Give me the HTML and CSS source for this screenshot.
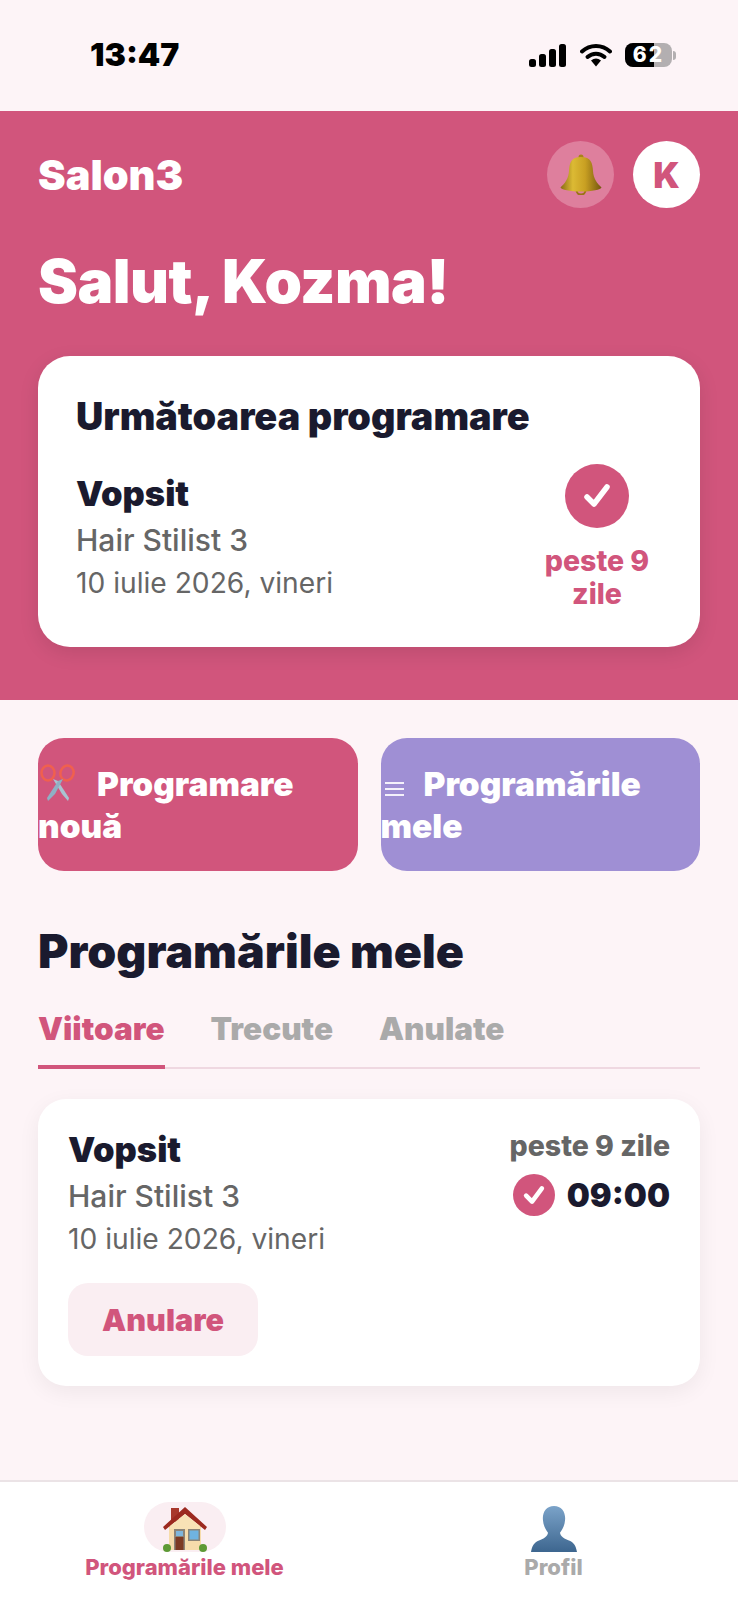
FILE: index.html
```html
<!DOCTYPE html>
<html lang="ro">
<head>
	<meta charset="UTF-8">
	<title>Salon3</title>
	<link rel="stylesheet" href="styles.css">
</head>
<body>
<div class="status">
	<span class="clock">13:47</span>
	<div class="status-icons">
		<svg class="signal" width="37" height="23" viewBox="0 0 37 23"><rect x="0" y="15" width="7" height="8" rx="2.500"/><rect x="10" y="10" width="7" height="13" rx="2.500"/><rect x="20" y="5" width="7" height="18" rx="2.500"/><rect x="30" y="0" width="7" height="23" rx="2.500"/></svg>
		<svg class="wifi" width="32" height="24" viewBox="0 0 32 24"><path d="M2 8.500C10 1 22 1 30 8.500" fill="none" stroke="#000" stroke-width="4" stroke-linecap="round"/><path d="M7.500 14C12.500 9.500 19.500 9.500 24.500 14" fill="none" stroke="#000" stroke-width="4" stroke-linecap="round"/><path d="M11 17.500Q16 13.500 21 17.500L16 23.500Z"/></svg>
		<div class="battery"><span class="battery-fill"></span><span class="battery-num">62</span></div>
		<span class="battery-tip"></span>
	</div>
</div>

<div class="hero">
	<div class="hero-top">
		<span class="brand">Salon3</span>
		<div class="hero-actions">
			<div class="round round-bell">
				<svg width="42" height="41" viewBox="0 0 42 41">
					<defs><linearGradient id="bellGold" x1="0" y1="0" x2="1" y2="0"><stop offset="0" stop-color="#8a6c14"/><stop offset=".3" stop-color="#dcba34"/><stop offset=".6" stop-color="#c9a022"/><stop offset="1" stop-color="#74560f"/></linearGradient></defs>
					<circle cx="21" cy="36" r="4.500" fill="none" stroke="#9a7414" stroke-width="2"/>
					<circle cx="21" cy="3" r="2.500" fill="#a88418"/>
					<path d="M21 3C11 3 9.500 9 9 17C8.500 25 5 29 .5 33.500C1 35.500 10 37.500 21 37.500C32 37.500 41 35.500 41.500 33.500C37 29 33.500 25 33 17C32.500 9 31 3 21 3Z" fill="url(#bellGold)"/>
				</svg>
			</div>
			<div class="round round-user">K</div>
		</div>
	</div>
	<h1 class="hello">Salut, Kozma!</h1>
	<div class="next-card">
		<h2 class="next-title">Următoarea programare</h2>
		<div class="next-row">
			<div class="next-info">
				<div class="service">Vopsit</div>
				<div class="stylist">Hair Stilist 3</div>
				<div class="meta">10 iulie 2026, vineri</div>
			</div>
			<div class="next-side">
				<svg width="64" height="64" viewBox="0 0 64 64"><circle cx="32" cy="32" r="32" fill="#d1557c"/><path d="M22 33L29 40L42 23" fill="none" stroke="#fff" stroke-width="5.500" stroke-linecap="round" stroke-linejoin="round"/></svg>
				<div class="next-when">peste 9<br>zile</div>
			</div>
		</div>
	</div>
</div>

<div class="actions">
	<a class="action action-new"><span><svg class="scissors" width="40" height="38" viewBox="0 0 40 38"><ellipse cx="10" cy="9" rx="6.500" ry="7.500" fill="none" stroke="#f0604e" stroke-width="2.500"/><ellipse cx="29" cy="9" rx="6.500" ry="7.500" fill="none" stroke="#f0604e" stroke-width="2.500" transform="rotate(20 29 9)"/><path d="M15 15L20 17L31 34L30 37L24 30Z" fill="#a9c3d1"/><path d="M25 15L20 17L9 34L10 37L17 30Z" fill="#8fb0c4"/></svg><span class="gap"></span>Programare nouă</span></a>
	<a class="action action-list"><span><svg class="lines" width="24" height="16" viewBox="0 0 24 16"><rect x="4" y="1" width="19" height="2" fill="#f4f1fb"/><rect x="4" y="7" width="19" height="2" fill="#f4f1fb"/><rect x="4" y="13" width="19" height="2" fill="#f4f1fb"/></svg><span class="gap-small"></span>Programările mele</span></a>
</div>

<div class="section">
	<h2 class="section-title">Programările mele</h2>
	<div class="tabs">
		<span class="tab tab-on">Viitoare</span>
		<span class="tab">Trecute</span>
		<span class="tab">Anulate</span>
	</div>
	<div class="item">
		<div class="item-top">
			<div>
				<div class="service">Vopsit</div>
				<div class="stylist">Hair Stilist 3</div>
				<div class="meta">10 iulie 2026, vineri</div>
			</div>
			<div class="item-side">
				<div class="item-when">peste 9 zile</div>
				<div class="item-time">
					<svg width="42" height="42" viewBox="0 0 64 64"><circle cx="32" cy="32" r="32" fill="#d1557c"/><path d="M20 33L29 42L44 22" fill="none" stroke="#fff" stroke-width="7" stroke-linecap="round" stroke-linejoin="round"/></svg>
					<span>09:00</span>
				</div>
			</div>
		</div>
		<a class="cancel">Anulare</a>
	</div>
</div>

<div class="nav">
	<div class="nav-item nav-on">
		<div class="nav-pill">
			<svg width="44" height="45" viewBox="0 0 44 45">
				<rect x="8" y="1" width="8" height="14" fill="#a8392c"/>
				<rect x="6" y="18" width="32" height="25" fill="#f6dcab"/>
				<path d="M22 0L44 20L42 23L22 7L2 23L0 20Z" fill="#9c2a20"/>
				<path d="M22 7L37 19V22H7V19Z" fill="#f8e2b6"/>
				<rect x="11" y="22" width="11" height="21" fill="#8b8478"/>
				<rect x="12.500" y="30" width="8" height="13" fill="#7d3a22"/>
				<rect x="13" y="24" width="7" height="5" fill="#7fb6dc"/>
				<rect x="25" y="22" width="12" height="12" fill="#8b8478"/>
				<rect x="26.500" y="23.500" width="9" height="9" fill="#6fb3e0"/>
				<circle cx="4" cy="41" r="4" fill="#5d9a35"/><circle cx="40" cy="41" r="4" fill="#5d9a35"/>
			</svg>
		</div>
		<span class="nav-label">Programările mele</span>
	</div>
	<div class="nav-item">
		<div class="nav-pill-empty">
			<svg width="46" height="46" viewBox="0 0 46 48" preserveAspectRatio="none">
				<defs><linearGradient id="bust" x1="0" y1="0" x2="0" y2="1"><stop offset="0" stop-color="#7ba3c9"/><stop offset="1" stop-color="#3d668f"/></linearGradient></defs>
				<path d="M23 0C31 0 35 7 34 15C33.500 21 31 25 29 28C29.500 32 33 34 38 36C43 38 45 42 46 48H0C1 42 3 38 8 36C13 34 16.500 32 17 28C15 25 12.500 21 12 15C11 7 15 0 23 0Z" fill="url(#bust)"/>
			</svg>
		</div>
		<span class="nav-label">Profil</span>
	</div>
</div>
</body>
</html>
```

FILE: styles.css
```css
*{
	box-sizing: border-box;
}
html, body{
	margin: 0;
	padding: 0;
}
body{
	width: 738px;
	height: 1600px;
	background: #fdf4f7;
	font-family: Inter, "Liberation Sans", sans-serif;
	color: #1a1a2e;
	display: flex;
	flex-direction: column;
}
h1, h2{
	margin: 0;
}
.status{
	height: 111px;
	padding: 34px 62px 0 90px;
	display: flex;
	justify-content: space-between;
}
.clock{
	font-size: 32px;
	line-height: 42px;
	font-weight: 900;
	color: #000;
}
.status-icons{
	display: flex;
	align-items: center;
	height: 42px;
}
.wifi{
	margin-left: 14px;
}
.battery{
	position: relative;
	width: 47px;
	height: 24px;
	margin-left: 13px;
	border-radius: 8px;
	background: #b3afb1;
	overflow: hidden;
	text-align: center;
}
.battery-fill{
	position: absolute;
	left: 0;
	top: 0;
	width: 29px;
	height: 24px;
	background: #000;
}
.battery-num{
	position: relative;
	font-size: 21px;
	line-height: 24px;
	font-weight: 800;
	letter-spacing: 2px;
	color: #fff;
}
.battery-tip{
	width: 3px;
	height: 9px;
	margin-left: 1px;
	border-radius: 0 3px 3px 0;
	background: #b3afb1;
}
.hero{
	height: 589px;
	padding: 30px 38px 0;
	background: #d1557c;
}
.hero-top{
	display: flex;
	justify-content: space-between;
	align-items: center;
}
.brand{
	font-size: 41.500px;
	font-weight: 900;
	color: #fff;
}
.hero-actions{
	display: flex;
	gap: 19px;
}
.round{
	width: 67px;
	height: 67px;
	border-radius: 50%;
	display: flex;
	align-items: center;
	justify-content: center;
}
.round-bell{
	background: #de7f9d;
}
.round-user{
	background: #fff;
	color: #d1557c;
	font-size: 35px;
	font-weight: 900;
}
.hello{
	margin-top: 39px;
	font-size: 60px;
	line-height: 68px;
	font-weight: 900;
	letter-spacing: -.5px;
	color: #fff;
}
.next-card{
	height: 291px;
	margin-top: 41px;
	padding: 38px 38px 0;
	background: #fff;
	border-radius: 32px;
	box-shadow: 0 6px 20px rgba(0,0,0,.1);
}
.next-title{
	font-size: 37.800px;
	line-height: 44px;
	font-weight: 900;
}
.next-row{
	display: flex;
	justify-content: space-between;
	margin-top: 34px;
}
.service{
	font-size: 34.500px;
	line-height: 44px;
	font-weight: 900;
}
.stylist{
	margin-top: 3px;
	font-size: 30px;
	line-height: 43px;
	font-weight: 500;
	color: #666;
}
.meta{
	font-size: 28.200px;
	line-height: 43px;
	color: #666;
}
.next-side{
	width: 124px;
	margin-right: 3px;
	display: flex;
	flex-direction: column;
	align-items: center;
	margin-top: -8px;
}
.next-when{
	margin-top: 16px;
	font-size: 28.500px;
	line-height: 33px;
	font-weight: 800;
	color: #d1557c;
	text-align: center;
}
.actions{
	display: flex;
	gap: 23px;
	padding: 38px 38px 0;
}
.action{
	flex: 1;
	height: 133px;
	border-radius: 26px;
	display: flex;
	align-items: center;
	font-size: 33.400px;
	line-height: 42px;
	font-weight: 900;
	color: #fff;
}
.action-new{
	background: #d1557c;
}
.action-list{
	background: #9f8fd4;
}
.scissors{
	vertical-align: -6px;
}
.gap{
	display: inline-block;
	width: 19px;
}
.gap-small{
	display: inline-block;
	width: 19px;
}
.lines{
	vertical-align: -1px;
}
.section{
	padding: 0 38px;
}
.section-title{
	margin-top: 51px;
	font-size: 46.500px;
	line-height: 58px;
	font-weight: 900;
}
.tabs{
	display: flex;
	gap: 46px;
	margin-top: 28px;
	border-bottom: 2px solid #efd8e1;
	height: 61px;
}
.tab{
	font-size: 31.500px;
	line-height: 42px;
	font-weight: 900;
	color: #aaa;
	height: 61px;
}
.tab-on{
	color: #d1557c;
	border-bottom: 4px solid #d1557c;
}
.item{
	height: 287px;
	margin-top: 30px;
	padding: 29px 30px 0;
	background: #fff;
	border-radius: 28px;
	box-shadow: 0 6px 22px rgba(0,0,0,.06);
}
.item-top{
	display: flex;
	justify-content: space-between;
}
.item-side{
	display: flex;
	flex-direction: column;
	align-items: flex-end;
}
.item-when{
	font-size: 28.500px;
	line-height: 36px;
	font-weight: 800;
	color: #666;
}
.item-time{
	display: flex;
	align-items: center;
	gap: 12px;
	margin-top: 10px;
	font-size: 32.500px;
	font-weight: 900;
}
.cancel{
	display: block;
	width: 190px;
	height: 73px;
	margin-top: 22px;
	border-radius: 20px;
	background: #faeef2;
	color: #d1557c;
	font-size: 30.500px;
	line-height: 73px;
	font-weight: 900;
	text-align: center;
}
.nav{
	margin-top: auto;
	height: 120px;
	background: #fff;
	border-top: 2px solid #ebe3e6;
	display: flex;
	flex: none;
}
.nav-item{
	flex: 1;
	display: flex;
	flex-direction: column;
	align-items: center;
	padding-top: 20px;
}
.nav-pill{
	width: 82px;
	height: 50px;
	border-radius: 25px;
	background: #faeef2;
	display: flex;
	justify-content: center;
	align-items: flex-end;
}
.nav-pill-empty{
	height: 50px;
	display: flex;
	align-items: flex-end;
}
.nav-label{
	font-size: 22px;
	line-height: 30px;
	font-weight: 800;
	color: #aaa;
}
.nav-on .nav-label{
	color: #d1557c;
}
```
